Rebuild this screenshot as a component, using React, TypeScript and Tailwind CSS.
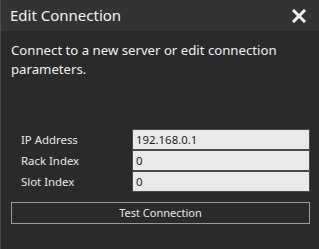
import React from "react";

export default function App() {
  const font = { fontFamily: '"Noto Sans", "Open Sans", sans-serif' };
  const fields = [
    { label: "IP Address", value: "192.168.0.1" },
    { label: "Rack Index", value: "0" },
    { label: "Slot Index", value: "0" },
  ];
  return (
    <div
      className="w-[319px] h-[249px] bg-[#2a2a2a] border-l border-[#4d4d4d] flex flex-col overflow-hidden"
      style={font}
    >
      <div className="h-[31px] bg-[#333333] flex items-center justify-between pl-[9px] pr-[13px] shrink-0">
        <span className="text-[15px] text-[#f2f2f2] leading-none">Edit Connection</span>
        <svg width="14" height="14" viewBox="0 0 14 14">
          <path d="M2 2 L12 12 M12 2 L2 12" stroke="#f2f2f2" strokeWidth="3" strokeLinecap="square" />
        </svg>
      </div>
      <div className="pl-[10px] pr-[10px] pt-[10px] text-[13.2px] leading-[19px] text-[#f0f0f0]">
        Connect to a new server or edit connection parameters.
      </div>
      <div className="mt-[50px] flex flex-col pr-[9px]">
        {fields.map((f) => (
          <div key={f.label} className="flex items-center h-[21px]">
            <span className="w-[131px] pl-[20px] text-[11.4px] text-[#e8e8e8] shrink-0">{f.label}</span>
            <div className="flex-1 h-[21px] bg-[#e9e9e9] border border-[#4a4a4a] flex items-center pl-[3px] text-[11.4px] text-[#1e1e1e]">
              {f.value}
            </div>
          </div>
        ))}
      </div>
      <div className="mt-[10px] ml-[10px] mr-[9px] h-[22px] border border-[#9a9a9a] flex items-center justify-center text-[11px] text-[#e8e8e8]">
        Test Connection
      </div>
    </div>
  );
}
